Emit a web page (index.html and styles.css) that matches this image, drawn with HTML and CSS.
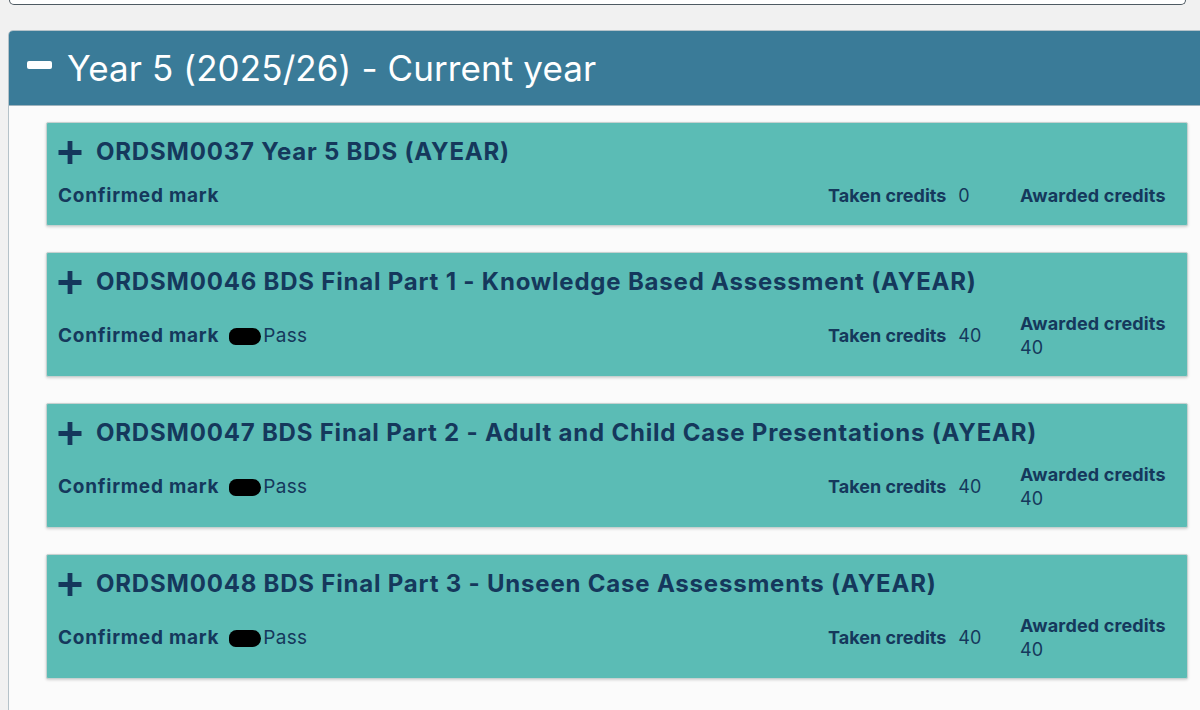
FILE: index.html
```html
<!DOCTYPE html>
<html lang="en">
<head>
<meta charset="utf-8">
<title>Year 5 modules</title>
<link rel="stylesheet" href="styles.css">
</head>
<body>
<div class="topbox"></div>
<section class="panel">
  <header class="panel-head">
    <span class="minus"></span>
    <h2>Year 5 (2025/26) - Current year</h2>
  </header>
  <div class="panel-body">
    <article class="card">
      <h3 class="card-title"><svg class="plus" viewBox="0 0 24 24"><path d="M9.5 0h5v9.5H24v5h-9.5V24h-5v-9.5H0v-5h9.5z"/></svg>ORDSM0037 Year 5 BDS (AYEAR)</h3>
      <div class="row">
        <div class="mark"><b>Confirmed mark</b></div>
        <div class="taken"><b>Taken credits</b><span class="val">0</span></div>
        <div class="awarded"><b>Awarded credits</b></div>
      </div>
    </article>
    <article class="card">
      <h3 class="card-title"><svg class="plus" viewBox="0 0 24 24"><path d="M9.5 0h5v9.5H24v5h-9.5V24h-5v-9.5H0v-5h9.5z"/></svg>ORDSM0046 BDS Final Part 1 - Knowledge Based Assessment (AYEAR)</h3>
      <div class="row">
        <div class="mark"><b>Confirmed mark</b><span class="redact"></span><span class="pass">Pass</span></div>
        <div class="taken"><b>Taken credits</b><span class="val">40</span></div>
        <div class="awarded"><b>Awarded credits</b><span class="aval">40</span></div>
      </div>
    </article>
    <article class="card">
      <h3 class="card-title"><svg class="plus" viewBox="0 0 24 24"><path d="M9.5 0h5v9.5H24v5h-9.5V24h-5v-9.5H0v-5h9.5z"/></svg>ORDSM0047 BDS Final Part 2 - Adult and Child Case Presentations (AYEAR)</h3>
      <div class="row">
        <div class="mark"><b>Confirmed mark</b><span class="redact"></span><span class="pass">Pass</span></div>
        <div class="taken"><b>Taken credits</b><span class="val">40</span></div>
        <div class="awarded"><b>Awarded credits</b><span class="aval">40</span></div>
      </div>
    </article>
    <article class="card">
      <h3 class="card-title"><svg class="plus" viewBox="0 0 24 24"><path d="M9.5 0h5v9.5H24v5h-9.5V24h-5v-9.5H0v-5h9.5z"/></svg>ORDSM0048 BDS Final Part 3 - Unseen Case Assessments (AYEAR)</h3>
      <div class="row">
        <div class="mark"><b>Confirmed mark</b><span class="redact"></span><span class="pass">Pass</span></div>
        <div class="taken"><b>Taken credits</b><span class="val">40</span></div>
        <div class="awarded"><b>Awarded credits</b><span class="aval">40</span></div>
      </div>
    </article>
  </div>
</section>
</body>
</html>
```
FILE: styles.css
```css
html, body {
  margin: 0;
  padding: 0;
  overflow: hidden;
}
body {
  width: 1200px;
  height: 710px;
  background: #f1f1f1;
  font-family: Inter, "Noto Sans", "Liberation Sans", sans-serif;
  color: #15385c;
}
.topbox {
  margin: -10px 14px 0 9px;
  height: 14px;
  background: #fff;
  border: 1px solid #4f5b63;
  border-top: none;
  border-radius: 0 0 5px 5px;
}
.panel {
  margin: 25px -40px 0 8px;
  border: 1px solid #b5c2c9;
  border-radius: 5px 5px 0 0;
  background: #fbfbfb;
}
.panel-head {
  display: flex;
  align-items: center;
  height: 74px;
  padding-left: 18px;
  background: #3a7b98;
  border-bottom: 1px solid #9fb3bd;
  border-radius: 4px 4px 0 0;
  color: #fff;
}
.minus {
  width: 25px;
  height: 8px;
  border-radius: 2px;
  background: #fff;
  margin-top: -6px;
  margin-right: 15px;
}
.panel-head h2 {
  margin: 0;
  font-size: 35px;
  font-weight: 400;
  letter-spacing: 0.1px;
}
.panel-body {
  padding: 16px 0 60px 37px;
  width: 1142px;
  display: flex;
  flex-direction: column;
  gap: 26px;
}
.card {
  background: #5bbcb5;
  border: 1px solid #c6d1d0;
  border-radius: 2px;
  box-shadow: 0 1px 3px rgba(0, 0, 0, 0.18);
  padding: 12px 21px 16px 11px;
}
.card-title {
  margin: 0;
  display: flex;
  align-items: center;
  height: 32px;
  font-size: 24px;
  font-weight: 700;
  letter-spacing: 0.8px;
  white-space: nowrap;
}
.plus {
  width: 24px;
  height: 23px;
  flex: none;
  fill: #15385c;
  margin-right: 14px;
  margin-top: 2px;
}
.row {
  display: flex;
  align-items: center;
  min-height: 27px;
  margin-top: 15px;
  font-size: 18px;
  line-height: 24px;
}
.row b {
  font-weight: 700;
}
.mark {
  flex: 1;
  display: flex;
  align-items: center;
  font-size: 19px;
}
.mark b {
  letter-spacing: 0.75px;
}
.redact {
  display: inline-block;
  width: 32px;
  height: 17px;
  margin-left: 10px;
  background: #000;
  border-radius: 8px 9px 9px 7px;
}
.pass {
  margin-left: 2px;
  font-weight: 400;
  letter-spacing: 0.3px;
}
.taken {
  width: 192px;
}
.val {
  margin-left: 12px;
}
.awarded {
  width: 146px;
  display: flex;
  flex-direction: column;
  letter-spacing: 0.15px;
}
.aval {
  font-weight: 400;
}
```
